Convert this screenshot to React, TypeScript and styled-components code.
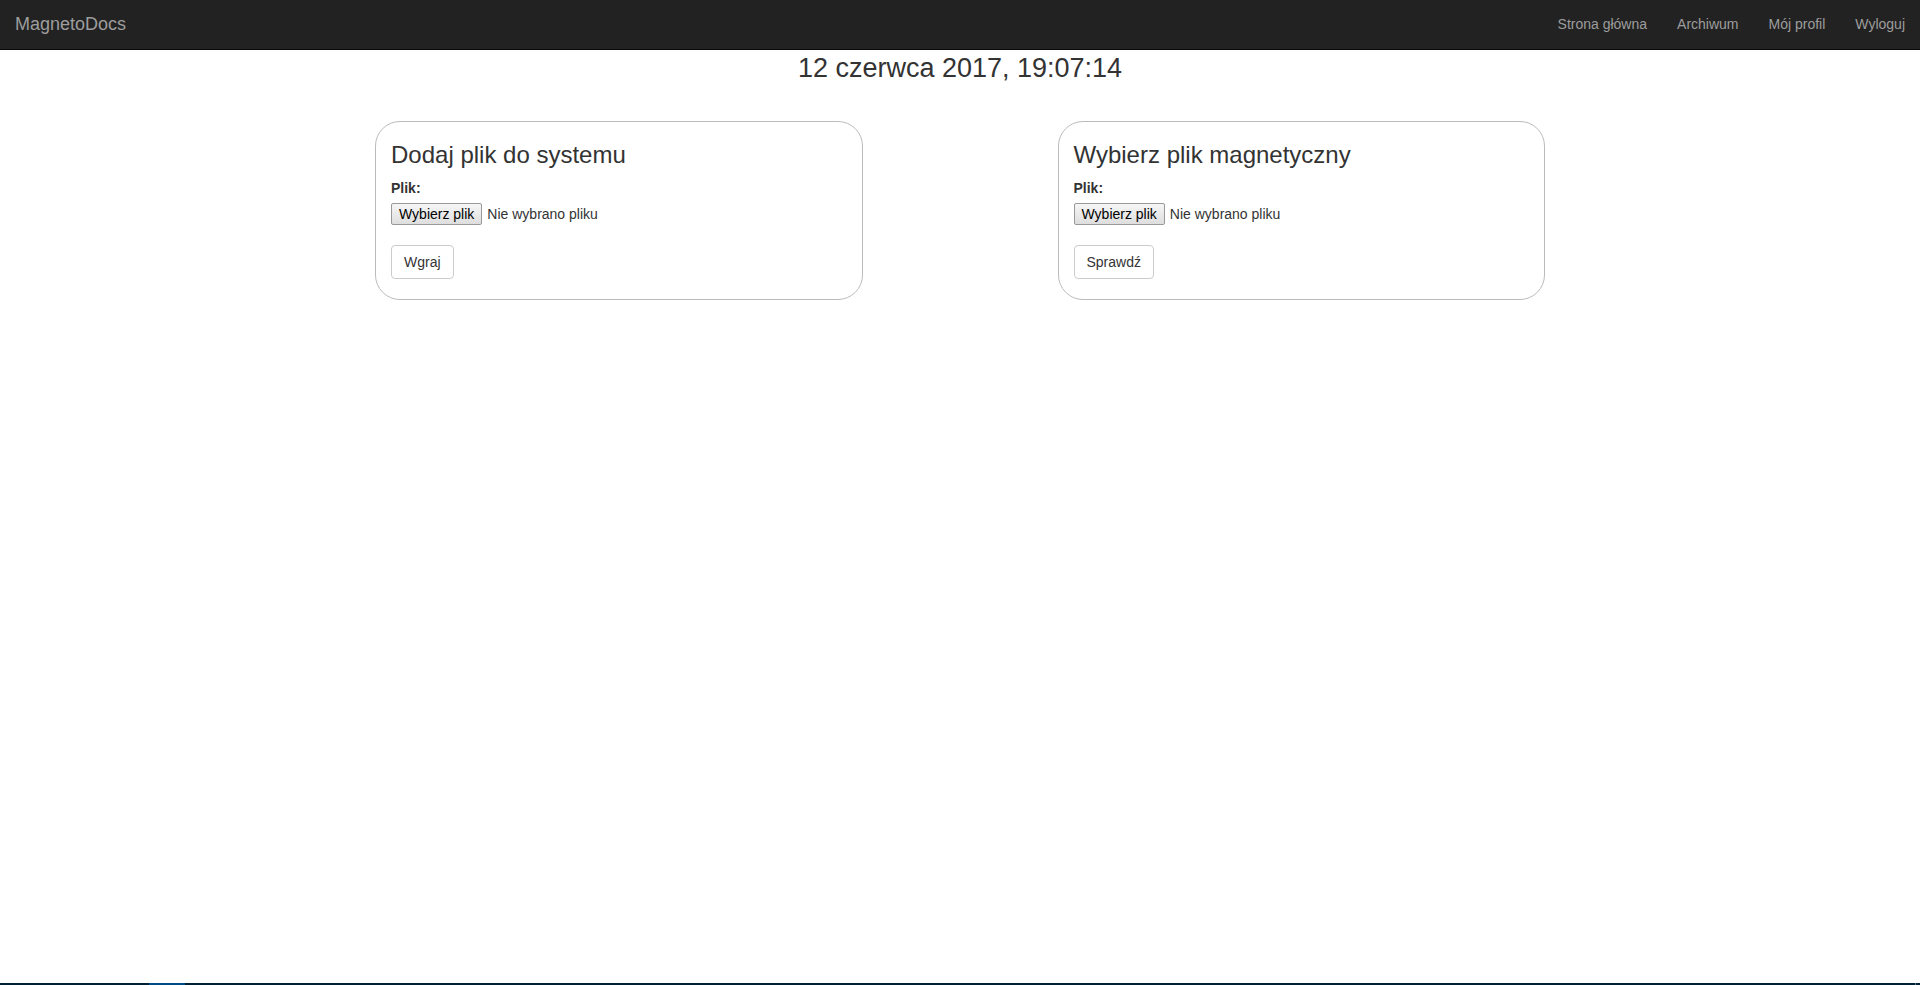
import React, { useRef, useState } from "react";
import styled, { createGlobalStyle } from "styled-components";

const GlobalStyle = createGlobalStyle`
  *, *::before, *::after { box-sizing: border-box; }
  body {
    margin: 0;
    background: #fff;
    color: #333;
    font: 14px/20px "Liberation Sans", Arial, sans-serif;
  }
`;

const Page = styled.div`
  display: flex;
  flex-direction: column;
  min-height: 100vh;
`;

const Navbar = styled.nav`
  display: flex;
  justify-content: space-between;
  min-height: 50px;
  background: #222;
  border-bottom: 1px solid #080808;
`;

const Brand = styled.a`
  padding: 14px 15px 15px;
  color: #9d9d9d;
  font-size: 18px;
  text-decoration: none;
`;

const NavLinks = styled.ul`
  display: flex;
  margin: 0;
  padding: 0;
  list-style: none;
`;

const NavLink = styled.a`
  display: block;
  padding: 14px 15px 15px;
  color: #9d9d9d;
  text-decoration: none;
  &:hover { color: #fff; }
`;

const Main = styled.main`
  flex: 1;
`;

const Clock = styled.time`
  display: block;
  padding: 3px 0 38px;
  font-size: 27px;
  line-height: 30px;
  text-align: center;
`;

const Cards = styled.div`
  display: flex;
  flex-wrap: wrap;
  justify-content: space-between;
  gap: 20px;
  max-width: 1170px;
  margin: 0 auto;
`;

const Card = styled.form`
  flex: 0 1 calc(100% * 5 / 12);
  min-width: 300px;
  padding: 20px 15px;
  border: 1px solid #bbb;
  border-radius: 25px;
`;

const CardTitle = styled.h3`
  margin: 0 0 10px;
  font-size: 24px;
  font-weight: 400;
  line-height: 26px;
`;

const FieldLabel = styled.label`
  display: block;
  margin-bottom: 5px;
  font-weight: 700;
`;

const FileRow = styled.div`
  display: flex;
  align-items: center;
  gap: 5px;
  margin-bottom: 20px;
`;

const PickButton = styled.button`
  height: 22px;
  padding: 0 7px;
  border: 1px solid #999;
  border-radius: 2px;
  background: linear-gradient(#f6f6f6, #dedede);
  color: #000;
  font: inherit;
  line-height: 20px;
`;

const SubmitButton = styled.button`
  display: block;
  padding: 6px 12px;
  border: 1px solid #ccc;
  border-radius: 4px;
  background: #fff;
  color: #333;
  font: inherit;
`;

const Taskbar = styled.footer`
  display: flex;
  height: 2px;
  background: #002035;
`;

const ActiveTask = styled.div`
  width: 36px;
  margin-left: 149px;
  background: #004b86;
`;

const DesktopEdge = styled.div`
  width: 1px;
  margin: 0 4px 0 auto;
  background: #5a7080;
`;

const links = ["Strona główna", "Archiwum", "Mój profil", "Wyloguj"];

interface FileCardProps {
  id: string;
  title: string;
  action: string;
}

function FileCard({ id, title, action }: FileCardProps) {
  const input = useRef<HTMLInputElement>(null);
  const [name, setName] = useState("Nie wybrano pliku");
  return (
    <Card onSubmit={(e) => e.preventDefault()}>
      <CardTitle>{title}</CardTitle>
      <FieldLabel htmlFor={id}>Plik:</FieldLabel>
      <FileRow>
        <input
          ref={input}
          id={id}
          type="file"
          hidden
          onChange={(e) => setName(e.target.files?.[0]?.name ?? "Nie wybrano pliku")}
        />
        <PickButton type="button" onClick={() => input.current?.click()}>
          Wybierz plik
        </PickButton>
        <output htmlFor={id}>{name}</output>
      </FileRow>
      <SubmitButton type="submit">{action}</SubmitButton>
    </Card>
  );
}

export default function App() {
  return (
    <Page>
      <GlobalStyle />
      <Navbar>
        <Brand href="#">MagnetoDocs</Brand>
        <NavLinks>
          {links.map((text) => (
            <li key={text}>
              <NavLink href="#">{text}</NavLink>
            </li>
          ))}
        </NavLinks>
      </Navbar>
      <Main>
        <Clock dateTime="2017-06-12T19:07:14">12 czerwca 2017, 19:07:14</Clock>
        <Cards>
          <FileCard id="upload" title="Dodaj plik do systemu" action="Wgraj" />
          <FileCard id="check" title="Wybierz plik magnetyczny" action="Sprawdź" />
        </Cards>
      </Main>
      <Taskbar>
        <ActiveTask />
        <DesktopEdge />
      </Taskbar>
    </Page>
  );
}
